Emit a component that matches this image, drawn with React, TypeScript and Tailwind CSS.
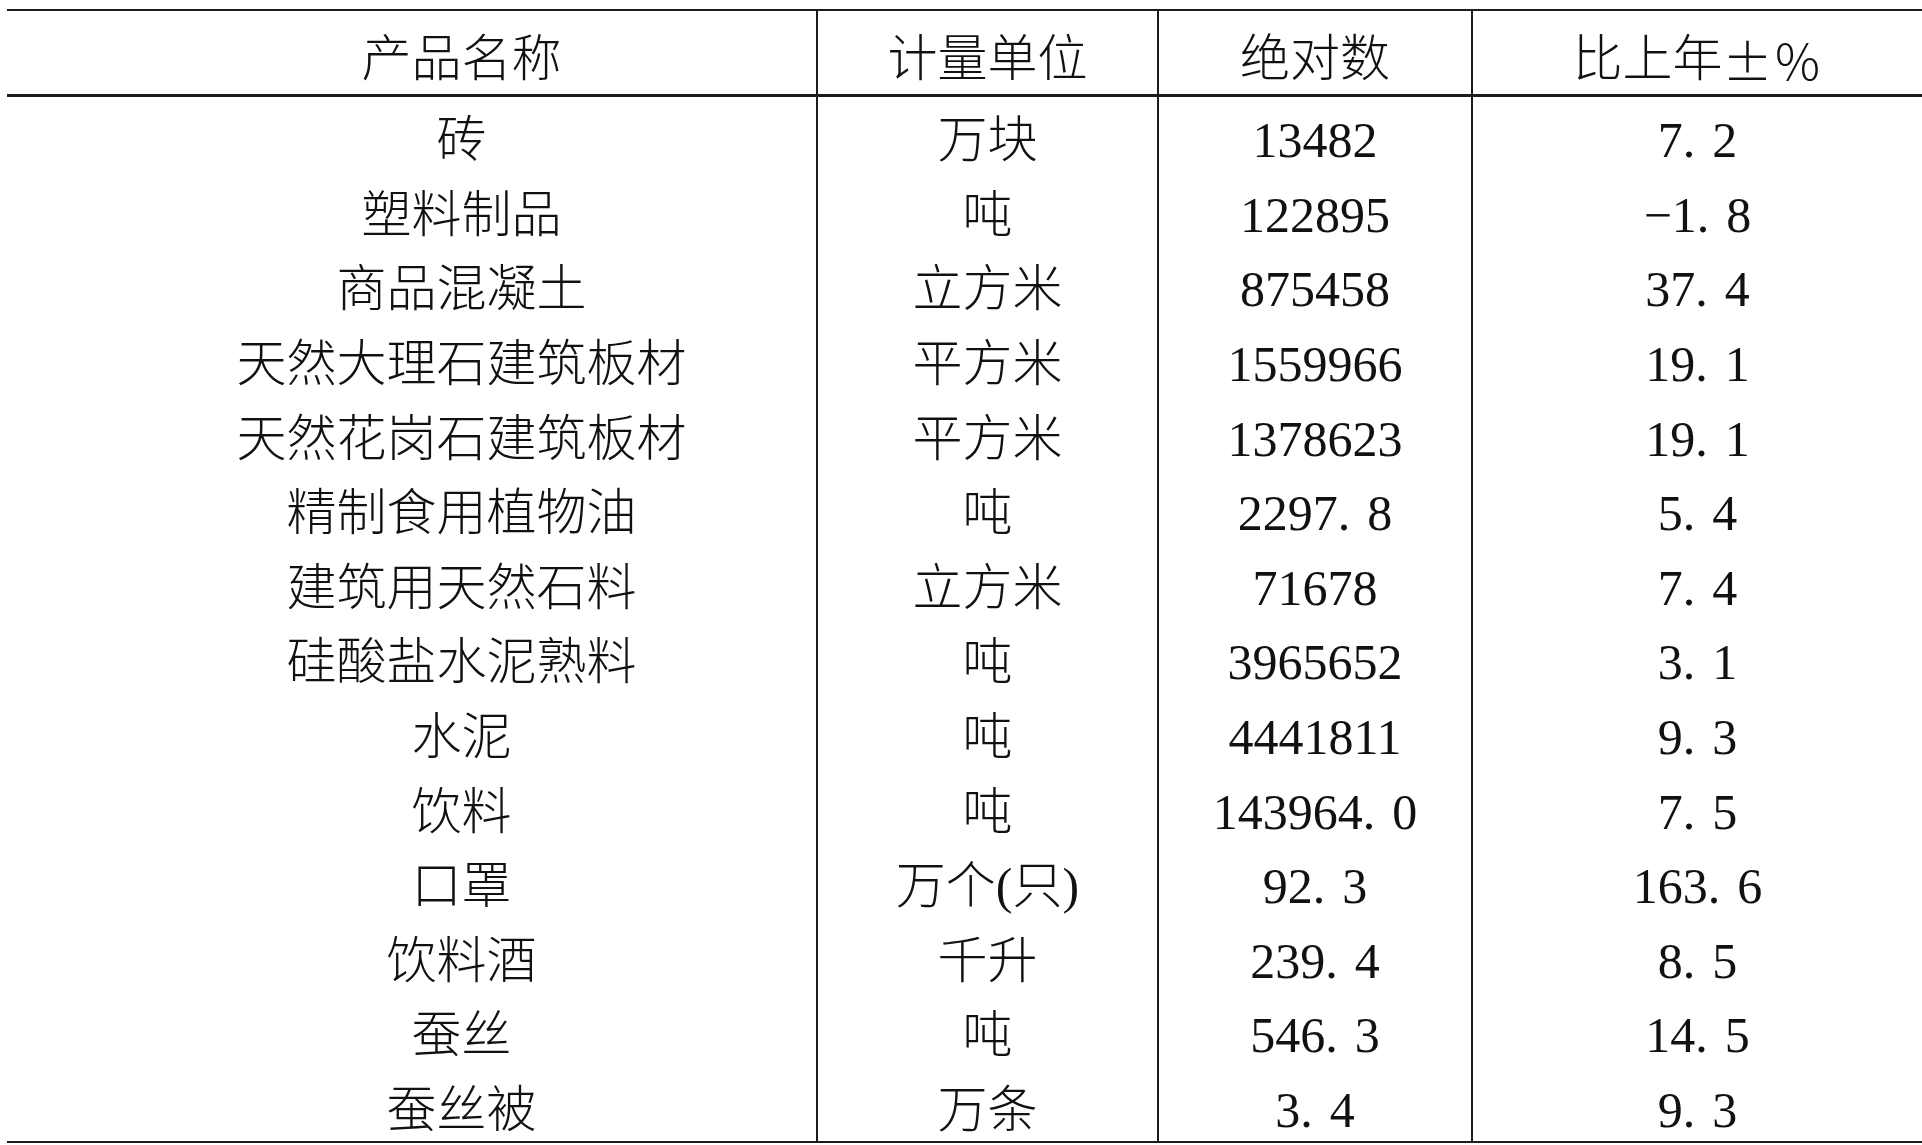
const rows: [string, string, string, string][] = [
  ["砖", "万块", "13482", "7.2"],
  ["塑料制品", "吨", "122895", "−1.8"],
  ["商品混凝土", "立方米", "875458", "37.4"],
  ["天然大理石建筑板材", "平方米", "1559966", "19.1"],
  ["天然花岗石建筑板材", "平方米", "1378623", "19.1"],
  ["精制食用植物油", "吨", "2297.8", "5.4"],
  ["建筑用天然石料", "立方米", "71678", "7.4"],
  ["硅酸盐水泥熟料", "吨", "3965652", "3.1"],
  ["水泥", "吨", "4441811", "9.3"],
  ["饮料", "吨", "143964.0", "7.5"],
  ["口罩", "万个(只)", "92.3", "163.6"],
  ["饮料酒", "千升", "239.4", "8.5"],
  ["蚕丝", "吨", "546.3", "14.5"],
  ["蚕丝被", "万条", "3.4", "9.3"],
];

// song-style fonts put a wide gap after the period, fake it with a margin
function Num({ value }: { value: string }) {
  const i = value.indexOf(".");
  if (i < 0) return <>{value}</>;
  return (
    <>
      {value.slice(0, i)}
      <span className="mr-[0.34em]">.</span>
      {value.slice(i + 1)}
    </>
  );
}

function Cell({ children, first }: { children: React.ReactNode; first?: boolean }) {
  return (
    <div
      className={
        "flex items-center justify-center pt-[12px] whitespace-nowrap " +
        (first ? "pl-[100px]" : "border-l-2 border-[#1c1c1c]")
      }
    >
      {children}
    </div>
  );
}

export default function App() {
  return (
    <div
      className="bg-white w-[1922px] h-[1145px] overflow-hidden pt-[9px] pl-[7px] text-[#111] font-light text-[50px] leading-none"
      style={{ fontFamily: '"Liberation Serif", "Noto Sans CJK SC", serif' }}
    >
      <div className="border-t-[2.5px] border-b-2 border-[#1c1c1c]">
        <div className="grid grid-cols-[809px_341px_314px_1fr] h-[86px] border-b-[3px] border-[#1c1c1c]">
          <Cell first>产品名称</Cell>
          <Cell>计量单位</Cell>
          <Cell>绝对数</Cell>
          <Cell>
            比上年<span style={{ fontFamily: '"Noto Sans CJK SC", sans-serif' }}>±％</span>
          </Cell>
        </div>
        {rows.map(([name, unit, abs, pct]) => (
          <div key={name} className="grid grid-cols-[809px_341px_314px_1fr] h-[74.6px]">
            <Cell first>{name}</Cell>
            <Cell>{unit}</Cell>
            <Cell>
              <Num value={abs} />
            </Cell>
            <Cell>
              <Num value={pct} />
            </Cell>
          </div>
        ))}
      </div>
    </div>
  );
}
